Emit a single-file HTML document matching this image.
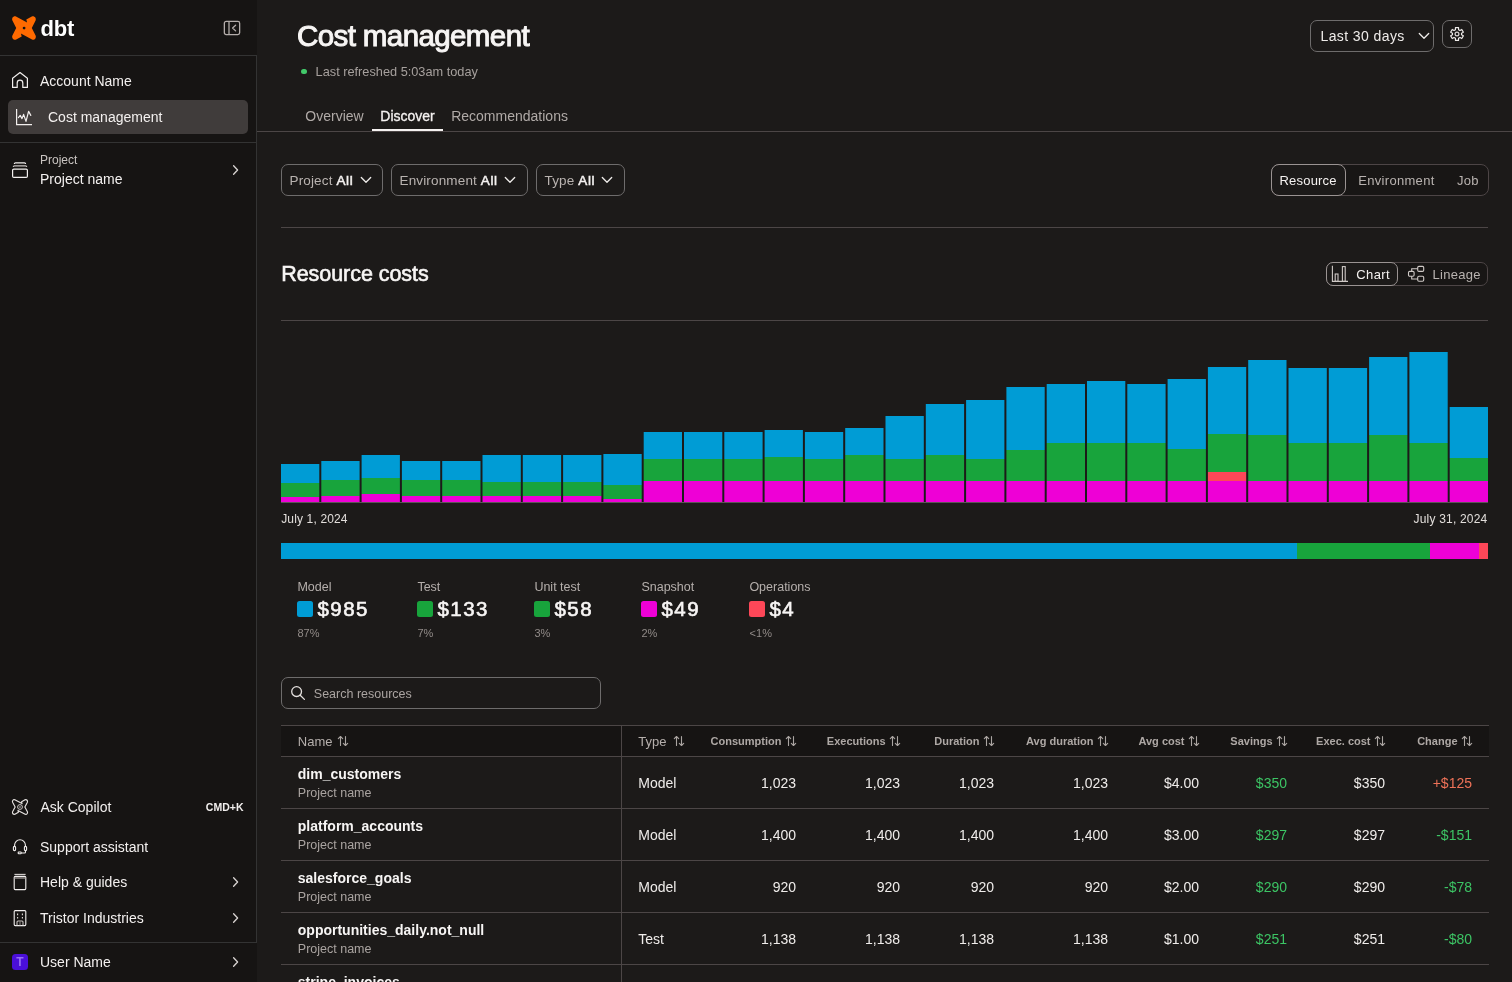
<!DOCTYPE html>
<html><head><meta charset="utf-8"><title>Cost management</title>
<style>
html,body{margin:0;padding:0;}
body{width:1512px;height:982px;overflow:hidden;position:relative;background:#1c1a19;font-family:"Liberation Sans",sans-serif;}
.abs{position:absolute;}
.t{position:absolute;white-space:nowrap;}
#root{position:absolute;left:0;top:0;width:1512px;height:982px;overflow:hidden;will-change:transform;}
svg{overflow:visible}
</style></head><body><div id="root">
<div class="abs" style="left:0px;top:0px;width:257px;height:982px;background:#161413"></div><div class="abs" style="left:0px;top:55px;width:256px;height:888px;border-top:1px solid #333333;border-right:1px solid #333333;border-bottom:1px solid #333333;box-sizing:border-box;width:257px;"></div><svg class="abs" style="left:12px;top:16px" width="24" height="24" viewBox="0 0 24 24">
<path d="M0.4 4.6C-0.6 2.2 1.4-0.4 4 0.5L15.1 6.4 14.3 3.6 19.8 0.5C22.4-0.4 24.6 2.2 23.6 4.6L19.8 12 23.6 19.4C24.6 21.8 22.6 24.4 20 23.5L8.9 17.6 9.7 20.4 4.2 23.5C1.6 24.4-0.6 21.8 0.4 19.4L4.2 12Z" fill="#ff6a00"/>
<circle cx="12.1" cy="12.1" r="1.4" fill="#161413"/></svg><div class="t" style="left:40.50px;top:18.38px;font-size:22px;line-height:22px;color:#ffffff;font-weight:700;letter-spacing:-0.2px;">dbt</div><svg class="abs" style="left:223px;top:20px" width="19" height="16" viewBox="0 0 19 16">
<rect x="1.35" y="1.35" width="15.3" height="13.3" rx="1.8" fill="none" stroke="#b3acaa" stroke-width="1.3"/>
<line x1="6" y1="1.5" x2="6" y2="14.5" stroke="#b3acaa" stroke-width="1.3"/>
<polyline points="12.6,5.3 9.6,8 12.6,10.9" fill="none" stroke="#b3acaa" stroke-width="1.3" stroke-linecap="round" stroke-linejoin="round"/></svg><svg class="abs" style="left:11px;top:71px" width="18" height="18" viewBox="0 0 18 18">
<path d="M1.6 16.4V7.3L9 1.6l7.4 5.7v9.1h-4.6v-4.4a2.8 2.8 0 0 0-5.6 0v4.4z" fill="none" stroke="#f2efee" stroke-width="1.2" stroke-linejoin="round"/></svg><div class="t" style="left:40.00px;top:73.55px;font-size:14px;line-height:14px;color:#f3f0ef;font-weight:400;">Account Name</div><div class="abs" style="left:8px;top:100px;width:240px;height:34px;background:#403c3b;border-radius:5px"></div><svg class="abs" style="left:15px;top:108px" width="18" height="18" viewBox="0 0 18 18">
<polyline points="1.6,1 1.6,16.6 17,16.6" fill="none" stroke="#f2efee" stroke-width="1.2"/>
<polyline points="3.4,9.6 5.2,7.4 7,10.6 8.6,6.4 11,13.4 13.6,3.4 15.8,7.4" fill="none" stroke="#f2efee" stroke-width="1.2" stroke-linejoin="round" stroke-linecap="round"/></svg><div class="t" style="left:48.00px;top:110.15px;font-size:14px;line-height:14px;color:#f3f0ef;font-weight:400;">Cost management</div><div class="abs" style="left:0px;top:142px;width:256px;height:1px;background:#333333"></div><svg class="abs" style="left:11px;top:161px" width="18" height="18" viewBox="0 0 18 18">
<rect x="1.6" y="8.1" width="14.8" height="8.3" rx="1.2" fill="none" stroke="#f2efee" stroke-width="1.2"/>
<path d="M2.3 6.1c0-.8.5-1.2 1.2-1.2h11c.7 0 1.2.4 1.2 1.2" fill="none" stroke="#c9c4c2" stroke-width="1.2"/>
<path d="M3.4 3c0-.7.4-1.1 1.1-1.1h9c.7 0 1.1.4 1.1 1.1" fill="none" stroke="#f2efee" stroke-width="1.2"/></svg><div class="t" style="left:40.00px;top:153.84px;font-size:12px;line-height:12px;color:#c9c4c1;font-weight:400;">Project</div><div class="t" style="left:40.00px;top:172.15px;font-size:14px;line-height:14px;color:#f3f0ef;font-weight:400;">Project name</div><svg class="abs" style="left:231px;top:164px" width="10" height="12" viewBox="0 0 10 12"><polyline points="2.6,1.8 6.6,6 2.6,10.2" fill="none" stroke="#d9d4d2" stroke-width="1.3" stroke-linecap="round" stroke-linejoin="round"/></svg><svg class="abs" style="left:12px;top:799px" width="16" height="16" viewBox="0 0 24 24">
<path d="M0.9 4.9C0 2.7 1.8 0.3 4.2 1.1L15.1 6.9 14.4 4.2 19.6 1.1C22 0.3 24 2.7 23.1 4.9L19.3 12 23.1 19.1C24 21.3 22.2 23.7 19.8 22.9L8.9 17.1 9.6 19.8 4.4 22.9C2 23.7 0 21.3 0.9 19.1L4.7 12Z" fill="none" stroke="#e8e4e2" stroke-width="1.7" stroke-linejoin="round"/>
<circle cx="12" cy="12" r="3.6" fill="none" stroke="#cfcac8" stroke-width="1.5"/><circle cx="12" cy="12" r="1.2" fill="#cfcac8"/></svg><div class="t" style="left:40.50px;top:800.45px;font-size:14px;line-height:14px;color:#f3f0ef;font-weight:400;">Ask Copilot</div><div class="t" style="right:1268.50px;text-align:right;top:802.41px;font-size:10.5px;line-height:10.5px;color:#f2efee;font-weight:700;">CMD+K</div><svg class="abs" style="left:11px;top:838px" width="18" height="17" viewBox="0 0 18 17">
<path d="M3.6 9V7.2a5.4 5.4 0 0 1 10.8 0V9" fill="none" stroke="#f2efee" stroke-width="1.1"/>
<rect x="2.4" y="8.4" width="2.2" height="4.2" rx="1" fill="none" stroke="#f2efee" stroke-width="1.1"/>
<rect x="13.4" y="8.4" width="2.2" height="4.2" rx="1" fill="none" stroke="#f2efee" stroke-width="1.1"/>
<path d="M14.5 12.8v1.2c0 .6-.4 1-1 1h-3.2" fill="none" stroke="#f2efee" stroke-width="1.1"/>
<rect x="7.2" y="14" width="3" height="1.8" rx=".6" fill="none" stroke="#f2efee" stroke-width="1.1"/></svg><div class="t" style="left:40.00px;top:839.55px;font-size:14px;line-height:14px;color:#f3f0ef;font-weight:400;">Support assistant</div><svg class="abs" style="left:12px;top:873px" width="16" height="18" viewBox="0 0 16 18">
<rect x="2.2" y="3.4" width="11.6" height="13.2" rx="1" fill="none" stroke="#f2efee" stroke-width="1.1"/>
<line x1="2.4" y1="1.4" x2="13.6" y2="1.4" stroke="#d9d4d2" stroke-width="1.1"/>
<line x1="2.4" y1="5" x2="13.6" y2="5" stroke="#9c9795" stroke-width="1.4"/></svg><div class="t" style="left:40.00px;top:875.15px;font-size:14px;line-height:14px;color:#f3f0ef;font-weight:400;">Help &amp; guides</div><svg class="abs" style="left:231px;top:876px" width="10" height="12" viewBox="0 0 10 12"><polyline points="2.6,1.8 6.6,6 2.6,10.2" fill="none" stroke="#d9d4d2" stroke-width="1.3" stroke-linecap="round" stroke-linejoin="round"/></svg><svg class="abs" style="left:12px;top:909px" width="16" height="18" viewBox="0 0 16 18">
<rect x="2.2" y="1.6" width="11.6" height="15" rx="1" fill="none" stroke="#f2efee" stroke-width="1.1"/>
<line x1="5.6" y1="4.6" x2="5.6" y2="6.2" stroke="#e0dbd9" stroke-width="1.1"/><line x1="10.4" y1="4.6" x2="10.4" y2="6.2" stroke="#e0dbd9" stroke-width="1.1"/>
<line x1="5.6" y1="8" x2="5.6" y2="9.6" stroke="#e0dbd9" stroke-width="1.1"/><line x1="10.4" y1="8" x2="10.4" y2="9.6" stroke="#e0dbd9" stroke-width="1.1"/>
<path d="M5 16.4v-3.4c0-.6.4-1 1-1h4c.6 0 1 .4 1 1v3.4" fill="none" stroke="#c9c4c2" stroke-width="1.1"/>
<line x1="8" y1="12.4" x2="8" y2="16.4" stroke="#8f8a88" stroke-width="1"/></svg><div class="t" style="left:40.00px;top:911.15px;font-size:14px;line-height:14px;color:#f3f0ef;font-weight:400;">Tristor Industries</div><svg class="abs" style="left:231px;top:912px" width="10" height="12" viewBox="0 0 10 12"><polyline points="2.6,1.8 6.6,6 2.6,10.2" fill="none" stroke="#d9d4d2" stroke-width="1.3" stroke-linecap="round" stroke-linejoin="round"/></svg><div class="abs" style="left:12px;top:954px;width:16px;height:16px;background:#4a0fd9;border-radius:3.5px"></div><div class="t" style="left:12px;top:954px;width:16px;height:16px;line-height:16px;text-align:center;font-size:12px;font-weight:700;color:#946ff0">T</div><div class="t" style="left:40.00px;top:955.35px;font-size:14px;line-height:14px;color:#f3f0ef;font-weight:400;">User Name</div><svg class="abs" style="left:231px;top:956px" width="10" height="12" viewBox="0 0 10 12"><polyline points="2.6,1.8 6.6,6 2.6,10.2" fill="none" stroke="#d9d4d2" stroke-width="1.3" stroke-linecap="round" stroke-linejoin="round"/></svg><div class="t" style="left:297.00px;top:21.33px;font-size:29.5px;line-height:29.5px;color:#f7f5f4;font-weight:400;letter-spacing:-0.6px;-webkit-text-stroke:1px #f7f5f4;">Cost management</div><div class="abs" style="left:301.3px;top:68.8px;width:5.6px;height:5.6px;border-radius:50%;background:#42c96a"></div><div class="t" style="left:315.60px;top:66.21px;font-size:12.75px;line-height:12.75px;color:#a6a09d;font-weight:400;">Last refreshed 5:03am today</div><div class="t" style="left:305.30px;top:108.85px;font-size:14px;line-height:14px;color:#b0aaa7;font-weight:400;">Overview</div><div class="t" style="left:380.30px;top:108.85px;font-size:14px;line-height:14px;color:#f5f2f1;font-weight:400;-webkit-text-stroke:0.3px #f5f2f1;">Discover</div><div class="t" style="left:451.20px;top:108.85px;font-size:14px;line-height:14px;color:#b0aaa7;font-weight:400;">Recommendations</div><div class="abs" style="left:257px;top:131px;width:1255px;height:1px;background:#4c4646"></div><div class="abs" style="left:372px;top:128.7px;width:71px;height:2.3px;background:#f5f2f1"></div><div class="abs" style="left:1310px;top:20px;width:124px;height:32px;border:1px solid #6e6c6c;border-radius:7px;box-sizing:border-box"></div><div class="t" style="left:1320.50px;top:29.35px;font-size:14px;line-height:14px;color:#efecea;font-weight:400;letter-spacing:0.4px;">Last 30 days</div><svg class="abs" style="left:1418px;top:32px" width="12" height="8" viewBox="0 0 12 8"><polyline points="1.3,1.5 6,6.3 10.7,1.5" fill="none" stroke="#efecea" stroke-width="1.3" stroke-linecap="round" stroke-linejoin="round"/></svg><div class="abs" style="left:1442px;top:20px;width:30px;height:28px;border:1px solid #6e6c6c;border-radius:7px;box-sizing:border-box"></div><svg class="abs" style="left:1449px;top:26px" width="16" height="16" viewBox="0 0 16 16"><path d="M6.45 3.67 L6.45 1.58 L9.55 1.58 L9.55 3.67 L10.98 4.49 L12.78 3.45 L14.33 6.13 L12.53 7.18 L12.53 8.82 L14.33 9.87 L12.78 12.55 L10.98 11.51 L9.55 12.33 L9.55 14.42 L6.45 14.42 L6.45 12.33 L5.02 11.51 L3.22 12.55 L1.67 9.87 L3.47 8.82 L3.47 7.18 L1.67 6.13 L3.22 3.45 L5.02 4.49Z" fill="none" stroke="#efecea" stroke-width="1.15" stroke-linejoin="round"/><circle cx="8" cy="8" r="1.9" fill="none" stroke="#d8d4d2" stroke-width="1.2"/></svg><div class="abs" style="left:281px;top:164px;width:102px;height:32px;border:1px solid #6e6c6c;border-radius:7px;box-sizing:border-box"></div><div class="t" style="left:289.5px;top:174.00px;font-size:13.5px;line-height:13px;letter-spacing:0.15px;white-space:pre"><span style="color:#b9b3b0">Project</span> <span style="color:#f5f2f1;-webkit-text-stroke:0.5px #f5f2f1;letter-spacing:0.6px">All</span></div><svg class="abs" style="left:359.5px;top:176px" width="12" height="8" viewBox="0 0 12 8"><polyline points="1.3,1.5 6,6.3 10.7,1.5" fill="none" stroke="#efecea" stroke-width="1.3" stroke-linecap="round" stroke-linejoin="round"/></svg><div class="abs" style="left:391px;top:164px;width:137px;height:32px;border:1px solid #6e6c6c;border-radius:7px;box-sizing:border-box"></div><div class="t" style="left:399.5px;top:174.00px;font-size:13.5px;line-height:13px;letter-spacing:0.15px;white-space:pre"><span style="color:#b9b3b0">Environment</span> <span style="color:#f5f2f1;-webkit-text-stroke:0.5px #f5f2f1;letter-spacing:0.6px">All</span></div><svg class="abs" style="left:504px;top:176px" width="12" height="8" viewBox="0 0 12 8"><polyline points="1.3,1.5 6,6.3 10.7,1.5" fill="none" stroke="#efecea" stroke-width="1.3" stroke-linecap="round" stroke-linejoin="round"/></svg><div class="abs" style="left:536px;top:164px;width:89px;height:32px;border:1px solid #6e6c6c;border-radius:7px;box-sizing:border-box"></div><div class="t" style="left:544.5px;top:174.00px;font-size:13.5px;line-height:13px;letter-spacing:0.15px;white-space:pre"><span style="color:#b9b3b0">Type</span> <span style="color:#f5f2f1;-webkit-text-stroke:0.5px #f5f2f1;letter-spacing:0.6px">All</span></div><svg class="abs" style="left:601px;top:176px" width="12" height="8" viewBox="0 0 12 8"><polyline points="1.3,1.5 6,6.3 10.7,1.5" fill="none" stroke="#efecea" stroke-width="1.3" stroke-linecap="round" stroke-linejoin="round"/></svg><div class="abs" style="left:1271px;top:164px;width:218px;height:32px;border:1px solid #4d4546;border-radius:8px;box-sizing:border-box;background:#181615"></div><div class="abs" style="left:1271px;top:164px;width:75px;height:32px;border:1px solid #9a9392;border-radius:8px;box-sizing:border-box;background:#1c1a19"></div><div class="t" style="left:1279.50px;top:174.30px;font-size:13px;line-height:13px;color:#f5f2f1;font-weight:400;letter-spacing:0.2px;">Resource</div><div class="t" style="left:1358.30px;top:174.30px;font-size:13px;line-height:13px;color:#b9b3b0;font-weight:400;letter-spacing:0.3px;">Environment</div><div class="t" style="left:1457.00px;top:174.30px;font-size:13px;line-height:13px;color:#b9b3b0;font-weight:400;letter-spacing:0.3px;">Job</div><div class="abs" style="left:281px;top:227px;width:1207px;height:1px;background:#4c4646"></div><div class="t" style="left:281.20px;top:264.40px;font-size:21.5px;line-height:21.5px;color:#f7f5f4;font-weight:400;letter-spacing:-0.05px;-webkit-text-stroke:0.6px #f7f5f4;">Resource costs</div><div class="abs" style="left:1326px;top:262px;width:162px;height:24px;border:1px solid #4d4546;border-radius:7px;box-sizing:border-box;background:#181615"></div><div class="abs" style="left:1326px;top:262px;width:72px;height:24px;border:1px solid #9a9392;border-radius:7px;box-sizing:border-box;background:#1c1a19"></div><svg class="abs" style="left:1331px;top:265px" width="18" height="18" viewBox="0 0 18 18">
<polyline points="1.4,0.8 1.4,16.4 17,16.4" fill="none" stroke="#cfc9c6" stroke-width="1.1"/>
<rect x="4.2" y="9" width="2.8" height="7.4" fill="none" stroke="#cfc9c6" stroke-width="1.1"/>
<rect x="11.4" y="1.6" width="2.8" height="14.8" fill="none" stroke="#cfc9c6" stroke-width="1.1"/></svg><div class="t" style="left:1356.30px;top:268.00px;font-size:13px;line-height:13px;color:#f5f2f1;font-weight:400;letter-spacing:0.4px;">Chart</div><svg class="abs" style="left:1407px;top:265px" width="18" height="18" viewBox="0 0 18 18">
<rect x="1.5" y="6.4" width="5.6" height="4.8" rx="1.2" fill="none" stroke="#cfc9c6" stroke-width="1.1"/>
<rect x="10.7" y="1.4" width="6" height="5" rx="1.2" fill="none" stroke="#cfc9c6" stroke-width="1.1"/>
<rect x="10.7" y="11.2" width="6" height="5" rx="1.2" fill="none" stroke="#cfc9c6" stroke-width="1.1"/>
<path d="M4.7 6.4V3.8h6M4.7 11.2v2.8h6" fill="none" stroke="#cfc9c6" stroke-width="1.1"/></svg><div class="t" style="left:1432.50px;top:268.00px;font-size:13px;line-height:13px;color:#b9b3b0;font-weight:400;letter-spacing:0.3px;">Lineage</div><div class="abs" style="left:281px;top:320px;width:1207px;height:1px;background:#4c4646"></div><svg class="abs" style="left:0;top:0" width="1512" height="982" viewBox="0 0 1512 982"><rect x="281.00" y="464" width="38.30" height="19" fill="#009cd5"/><rect x="281.00" y="483" width="38.30" height="14" fill="#18a43c"/><rect x="281.00" y="497" width="38.30" height="5" fill="#ee00d6"/><rect x="321.30" y="461" width="38.30" height="19" fill="#009cd5"/><rect x="321.30" y="480" width="38.30" height="16" fill="#18a43c"/><rect x="321.30" y="496" width="38.30" height="6" fill="#ee00d6"/><rect x="361.60" y="455" width="38.30" height="23" fill="#009cd5"/><rect x="361.60" y="478" width="38.30" height="16" fill="#18a43c"/><rect x="361.60" y="494" width="38.30" height="8" fill="#ee00d6"/><rect x="401.90" y="461" width="38.30" height="19" fill="#009cd5"/><rect x="401.90" y="480" width="38.30" height="16" fill="#18a43c"/><rect x="401.90" y="496" width="38.30" height="6" fill="#ee00d6"/><rect x="442.20" y="461" width="38.30" height="19" fill="#009cd5"/><rect x="442.20" y="480" width="38.30" height="16" fill="#18a43c"/><rect x="442.20" y="496" width="38.30" height="6" fill="#ee00d6"/><rect x="482.50" y="455" width="38.30" height="27" fill="#009cd5"/><rect x="482.50" y="482" width="38.30" height="14" fill="#18a43c"/><rect x="482.50" y="496" width="38.30" height="6" fill="#ee00d6"/><rect x="522.80" y="455" width="38.30" height="27" fill="#009cd5"/><rect x="522.80" y="482" width="38.30" height="14" fill="#18a43c"/><rect x="522.80" y="496" width="38.30" height="6" fill="#ee00d6"/><rect x="563.10" y="455" width="38.30" height="27" fill="#009cd5"/><rect x="563.10" y="482" width="38.30" height="14" fill="#18a43c"/><rect x="563.10" y="496" width="38.30" height="6" fill="#ee00d6"/><rect x="603.40" y="454" width="38.30" height="31" fill="#009cd5"/><rect x="603.40" y="485" width="38.30" height="14" fill="#18a43c"/><rect x="603.40" y="499" width="38.30" height="3" fill="#ee00d6"/><rect x="643.70" y="432" width="38.30" height="27" fill="#009cd5"/><rect x="643.70" y="459" width="38.30" height="22" fill="#18a43c"/><rect x="643.70" y="481" width="38.30" height="21" fill="#ee00d6"/><rect x="684.00" y="432" width="38.30" height="27" fill="#009cd5"/><rect x="684.00" y="459" width="38.30" height="22" fill="#18a43c"/><rect x="684.00" y="481" width="38.30" height="21" fill="#ee00d6"/><rect x="724.30" y="432" width="38.30" height="27" fill="#009cd5"/><rect x="724.30" y="459" width="38.30" height="22" fill="#18a43c"/><rect x="724.30" y="481" width="38.30" height="21" fill="#ee00d6"/><rect x="764.60" y="430" width="38.30" height="27" fill="#009cd5"/><rect x="764.60" y="457" width="38.30" height="24" fill="#18a43c"/><rect x="764.60" y="481" width="38.30" height="21" fill="#ee00d6"/><rect x="804.90" y="432" width="38.30" height="27" fill="#009cd5"/><rect x="804.90" y="459" width="38.30" height="22" fill="#18a43c"/><rect x="804.90" y="481" width="38.30" height="21" fill="#ee00d6"/><rect x="845.20" y="428" width="38.30" height="27" fill="#009cd5"/><rect x="845.20" y="455" width="38.30" height="26" fill="#18a43c"/><rect x="845.20" y="481" width="38.30" height="21" fill="#ee00d6"/><rect x="885.50" y="416" width="38.30" height="43" fill="#009cd5"/><rect x="885.50" y="459" width="38.30" height="22" fill="#18a43c"/><rect x="885.50" y="481" width="38.30" height="21" fill="#ee00d6"/><rect x="925.80" y="404" width="38.30" height="51" fill="#009cd5"/><rect x="925.80" y="455" width="38.30" height="26" fill="#18a43c"/><rect x="925.80" y="481" width="38.30" height="21" fill="#ee00d6"/><rect x="966.10" y="400" width="38.30" height="59" fill="#009cd5"/><rect x="966.10" y="459" width="38.30" height="22" fill="#18a43c"/><rect x="966.10" y="481" width="38.30" height="21" fill="#ee00d6"/><rect x="1006.40" y="387" width="38.30" height="63" fill="#009cd5"/><rect x="1006.40" y="450" width="38.30" height="31" fill="#18a43c"/><rect x="1006.40" y="481" width="38.30" height="21" fill="#ee00d6"/><rect x="1046.70" y="384" width="38.30" height="59" fill="#009cd5"/><rect x="1046.70" y="443" width="38.30" height="38" fill="#18a43c"/><rect x="1046.70" y="481" width="38.30" height="21" fill="#ee00d6"/><rect x="1087.00" y="381" width="38.30" height="62" fill="#009cd5"/><rect x="1087.00" y="443" width="38.30" height="38" fill="#18a43c"/><rect x="1087.00" y="481" width="38.30" height="21" fill="#ee00d6"/><rect x="1127.30" y="384" width="38.30" height="59" fill="#009cd5"/><rect x="1127.30" y="443" width="38.30" height="38" fill="#18a43c"/><rect x="1127.30" y="481" width="38.30" height="21" fill="#ee00d6"/><rect x="1167.60" y="379" width="38.30" height="70" fill="#009cd5"/><rect x="1167.60" y="449" width="38.30" height="32" fill="#18a43c"/><rect x="1167.60" y="481" width="38.30" height="21" fill="#ee00d6"/><rect x="1207.90" y="367" width="38.30" height="67" fill="#009cd5"/><rect x="1207.90" y="434" width="38.30" height="38" fill="#18a43c"/><rect x="1207.90" y="472" width="38.30" height="9" fill="#fd4758"/><rect x="1207.90" y="481" width="38.30" height="21" fill="#ee00d6"/><rect x="1248.20" y="360" width="38.30" height="75" fill="#009cd5"/><rect x="1248.20" y="435" width="38.30" height="46" fill="#18a43c"/><rect x="1248.20" y="481" width="38.30" height="21" fill="#ee00d6"/><rect x="1288.50" y="368" width="38.30" height="75" fill="#009cd5"/><rect x="1288.50" y="443" width="38.30" height="38" fill="#18a43c"/><rect x="1288.50" y="481" width="38.30" height="21" fill="#ee00d6"/><rect x="1328.80" y="368" width="38.30" height="75" fill="#009cd5"/><rect x="1328.80" y="443" width="38.30" height="38" fill="#18a43c"/><rect x="1328.80" y="481" width="38.30" height="21" fill="#ee00d6"/><rect x="1369.10" y="357" width="38.30" height="78" fill="#009cd5"/><rect x="1369.10" y="435" width="38.30" height="46" fill="#18a43c"/><rect x="1369.10" y="481" width="38.30" height="21" fill="#ee00d6"/><rect x="1409.40" y="352" width="38.30" height="91" fill="#009cd5"/><rect x="1409.40" y="443" width="38.30" height="38" fill="#18a43c"/><rect x="1409.40" y="481" width="38.30" height="21" fill="#ee00d6"/><rect x="1449.70" y="407" width="38.30" height="51" fill="#009cd5"/><rect x="1449.70" y="458" width="38.30" height="23" fill="#18a43c"/><rect x="1449.70" y="481" width="38.30" height="21" fill="#ee00d6"/><rect x="281" y="502" width="1207" height="1" fill="#5a5654"/><rect x="281" y="543" width="1016" height="16" fill="#009cd5"/><rect x="1297" y="543" width="133" height="16" fill="#18a43c"/><rect x="1430" y="543" width="49" height="16" fill="#ee00d6"/><rect x="1479" y="543" width="9" height="16" fill="#fd4758"/></svg><div class="t" style="left:281.20px;top:512.84px;font-size:12px;line-height:12px;color:#e2dedb;font-weight:400;letter-spacing:0.15px;">July 1, 2024</div><div class="t" style="right:24.50px;text-align:right;top:512.84px;font-size:12px;line-height:12px;color:#e2dedb;font-weight:400;letter-spacing:0.2px;">July 31, 2024</div><div class="t" style="left:297.40px;top:580.92px;font-size:12.5px;line-height:12.5px;color:#b5afac;font-weight:400;">Model</div><div class="abs" style="left:297px;top:601px;width:16px;height:16px;background:#009cd5;border-radius:2.5px"></div><div class="t" style="left:317.50px;top:599.25px;font-size:20.5px;line-height:20.5px;color:#f7f5f4;font-weight:400;letter-spacing:1.45px;-webkit-text-stroke:0.6px #f7f5f4;">$985</div><div class="t" style="left:297.40px;top:628.19px;font-size:11px;line-height:11px;color:#918b88;font-weight:400;letter-spacing:0.1px;">87%</div><div class="t" style="left:417.40px;top:580.92px;font-size:12.5px;line-height:12.5px;color:#b5afac;font-weight:400;">Test</div><div class="abs" style="left:417px;top:601px;width:16px;height:16px;background:#18a43c;border-radius:2.5px"></div><div class="t" style="left:437.50px;top:599.25px;font-size:20.5px;line-height:20.5px;color:#f7f5f4;font-weight:400;letter-spacing:1.45px;-webkit-text-stroke:0.6px #f7f5f4;">$133</div><div class="t" style="left:417.40px;top:628.19px;font-size:11px;line-height:11px;color:#918b88;font-weight:400;letter-spacing:0.1px;">7%</div><div class="t" style="left:534.40px;top:580.92px;font-size:12.5px;line-height:12.5px;color:#b5afac;font-weight:400;">Unit test</div><div class="abs" style="left:534px;top:601px;width:16px;height:16px;background:#18a43c;border-radius:2.5px"></div><div class="t" style="left:554.50px;top:599.25px;font-size:20.5px;line-height:20.5px;color:#f7f5f4;font-weight:400;letter-spacing:1.45px;-webkit-text-stroke:0.6px #f7f5f4;">$58</div><div class="t" style="left:534.40px;top:628.19px;font-size:11px;line-height:11px;color:#918b88;font-weight:400;letter-spacing:0.1px;">3%</div><div class="t" style="left:641.40px;top:580.92px;font-size:12.5px;line-height:12.5px;color:#b5afac;font-weight:400;">Snapshot</div><div class="abs" style="left:641px;top:601px;width:16px;height:16px;background:#ee00d6;border-radius:2.5px"></div><div class="t" style="left:661.50px;top:599.25px;font-size:20.5px;line-height:20.5px;color:#f7f5f4;font-weight:400;letter-spacing:1.45px;-webkit-text-stroke:0.6px #f7f5f4;">$49</div><div class="t" style="left:641.40px;top:628.19px;font-size:11px;line-height:11px;color:#918b88;font-weight:400;letter-spacing:0.1px;">2%</div><div class="t" style="left:749.40px;top:580.92px;font-size:12.5px;line-height:12.5px;color:#b5afac;font-weight:400;">Operations</div><div class="abs" style="left:749px;top:601px;width:16px;height:16px;background:#fd4758;border-radius:2.5px"></div><div class="t" style="left:769.50px;top:599.25px;font-size:20.5px;line-height:20.5px;color:#f7f5f4;font-weight:400;letter-spacing:1.45px;-webkit-text-stroke:0.6px #f7f5f4;">$4</div><div class="t" style="left:749.40px;top:628.19px;font-size:11px;line-height:11px;color:#918b88;font-weight:400;letter-spacing:0.1px;">&lt;1%</div><div class="abs" style="left:281px;top:677px;width:320px;height:32px;border:1px solid #6e6c6c;border-radius:7px;box-sizing:border-box"></div><svg class="abs" style="left:290px;top:685px" width="16" height="16" viewBox="0 0 16 16">
<circle cx="6.6" cy="6.6" r="4.9" fill="none" stroke="#e6e2e0" stroke-width="1.3"/>
<line x1="10.2" y1="10.2" x2="14.4" y2="14.4" stroke="#e6e2e0" stroke-width="1.3" stroke-linecap="round"/></svg><div class="t" style="left:313.80px;top:687.52px;font-size:12.5px;line-height:12.5px;color:#aaa4a1;font-weight:400;">Search resources</div><div class="abs" style="left:281px;top:725px;width:1208px;height:31px;background:#161413"></div><div class="abs" style="left:281px;top:725px;width:1208px;height:1px;background:#4c4646"></div><div class="abs" style="left:281px;top:756px;width:1208px;height:1px;background:#4c4646"></div><div class="abs" style="left:281px;top:808px;width:1208px;height:1px;background:#4c4646"></div><div class="abs" style="left:281px;top:860px;width:1208px;height:1px;background:#4c4646"></div><div class="abs" style="left:281px;top:912px;width:1208px;height:1px;background:#4c4646"></div><div class="abs" style="left:281px;top:964px;width:1208px;height:1px;background:#4c4646"></div><div class="abs" style="left:621px;top:725px;width:1px;height:257px;background:#4c4646"></div><div class="t" style="left:297.80px;top:735.20px;font-size:13px;line-height:13px;color:#b5afac;font-weight:400;">Name</div><svg class="abs" style="left:337px;top:735px" width="12" height="12" viewBox="0 0 12 12"><path d="M3.5 10.5V1.5M1.3 3.7l2.2-2.2 2.2 2.2M8.5 1.5v9M6.3 8.3l2.2 2.2 2.2-2.2" fill="none" stroke="#aba5a2" stroke-width="1.1" stroke-linecap="round" stroke-linejoin="round"/></svg><div class="t" style="left:638.30px;top:735.20px;font-size:13px;line-height:13px;color:#b5afac;font-weight:400;">Type</div><svg class="abs" style="left:673px;top:735px" width="12" height="12" viewBox="0 0 12 12"><path d="M3.5 10.5V1.5M1.3 3.7l2.2-2.2 2.2 2.2M8.5 1.5v9M6.3 8.3l2.2 2.2 2.2-2.2" fill="none" stroke="#aba5a2" stroke-width="1.1" stroke-linecap="round" stroke-linejoin="round"/></svg><div class="t" style="right:730.50px;text-align:right;top:736.29px;font-size:11px;line-height:11px;color:#aea8a5;font-weight:700;">Consumption</div><svg class="abs" style="left:785px;top:735px" width="12" height="12" viewBox="0 0 12 12"><path d="M3.5 10.5V1.5M1.3 3.7l2.2-2.2 2.2 2.2M8.5 1.5v9M6.3 8.3l2.2 2.2 2.2-2.2" fill="none" stroke="#aba5a2" stroke-width="1.1" stroke-linecap="round" stroke-linejoin="round"/></svg><div class="t" style="right:626.50px;text-align:right;top:736.29px;font-size:11px;line-height:11px;color:#aea8a5;font-weight:700;">Executions</div><svg class="abs" style="left:889px;top:735px" width="12" height="12" viewBox="0 0 12 12"><path d="M3.5 10.5V1.5M1.3 3.7l2.2-2.2 2.2 2.2M8.5 1.5v9M6.3 8.3l2.2 2.2 2.2-2.2" fill="none" stroke="#aba5a2" stroke-width="1.1" stroke-linecap="round" stroke-linejoin="round"/></svg><div class="t" style="right:532.50px;text-align:right;top:736.29px;font-size:11px;line-height:11px;color:#aea8a5;font-weight:700;">Duration</div><svg class="abs" style="left:983px;top:735px" width="12" height="12" viewBox="0 0 12 12"><path d="M3.5 10.5V1.5M1.3 3.7l2.2-2.2 2.2 2.2M8.5 1.5v9M6.3 8.3l2.2 2.2 2.2-2.2" fill="none" stroke="#aba5a2" stroke-width="1.1" stroke-linecap="round" stroke-linejoin="round"/></svg><div class="t" style="right:418.50px;text-align:right;top:736.29px;font-size:11px;line-height:11px;color:#aea8a5;font-weight:700;">Avg duration</div><svg class="abs" style="left:1097px;top:735px" width="12" height="12" viewBox="0 0 12 12"><path d="M3.5 10.5V1.5M1.3 3.7l2.2-2.2 2.2 2.2M8.5 1.5v9M6.3 8.3l2.2 2.2 2.2-2.2" fill="none" stroke="#aba5a2" stroke-width="1.1" stroke-linecap="round" stroke-linejoin="round"/></svg><div class="t" style="right:327.50px;text-align:right;top:736.29px;font-size:11px;line-height:11px;color:#aea8a5;font-weight:700;">Avg cost</div><svg class="abs" style="left:1188px;top:735px" width="12" height="12" viewBox="0 0 12 12"><path d="M3.5 10.5V1.5M1.3 3.7l2.2-2.2 2.2 2.2M8.5 1.5v9M6.3 8.3l2.2 2.2 2.2-2.2" fill="none" stroke="#aba5a2" stroke-width="1.1" stroke-linecap="round" stroke-linejoin="round"/></svg><div class="t" style="right:239.50px;text-align:right;top:736.29px;font-size:11px;line-height:11px;color:#aea8a5;font-weight:700;">Savings</div><svg class="abs" style="left:1276px;top:735px" width="12" height="12" viewBox="0 0 12 12"><path d="M3.5 10.5V1.5M1.3 3.7l2.2-2.2 2.2 2.2M8.5 1.5v9M6.3 8.3l2.2 2.2 2.2-2.2" fill="none" stroke="#aba5a2" stroke-width="1.1" stroke-linecap="round" stroke-linejoin="round"/></svg><div class="t" style="right:141.50px;text-align:right;top:736.29px;font-size:11px;line-height:11px;color:#aea8a5;font-weight:700;">Exec. cost</div><svg class="abs" style="left:1374px;top:735px" width="12" height="12" viewBox="0 0 12 12"><path d="M3.5 10.5V1.5M1.3 3.7l2.2-2.2 2.2 2.2M8.5 1.5v9M6.3 8.3l2.2 2.2 2.2-2.2" fill="none" stroke="#aba5a2" stroke-width="1.1" stroke-linecap="round" stroke-linejoin="round"/></svg><div class="t" style="right:54.50px;text-align:right;top:736.29px;font-size:11px;line-height:11px;color:#aea8a5;font-weight:700;">Change</div><svg class="abs" style="left:1461px;top:735px" width="12" height="12" viewBox="0 0 12 12"><path d="M3.5 10.5V1.5M1.3 3.7l2.2-2.2 2.2 2.2M8.5 1.5v9M6.3 8.3l2.2 2.2 2.2-2.2" fill="none" stroke="#aba5a2" stroke-width="1.1" stroke-linecap="round" stroke-linejoin="round"/></svg><div class="t" style="left:297.80px;top:767.15px;font-size:14px;line-height:14px;color:#f7f5f4;font-weight:700;">dim_customers</div><div class="t" style="left:297.80px;top:787.12px;font-size:12.5px;line-height:12.5px;color:#aaa4a1;font-weight:400;">Project name</div><div class="t" style="left:638.30px;top:775.55px;font-size:14px;line-height:14px;color:#efecea;font-weight:400;">Model</div><div class="t" style="right:716.00px;text-align:right;top:775.55px;font-size:14px;line-height:14px;color:#efecea;font-weight:400;">1,023</div><div class="t" style="right:612.00px;text-align:right;top:775.55px;font-size:14px;line-height:14px;color:#efecea;font-weight:400;">1,023</div><div class="t" style="right:518.00px;text-align:right;top:775.55px;font-size:14px;line-height:14px;color:#efecea;font-weight:400;">1,023</div><div class="t" style="right:404.00px;text-align:right;top:775.55px;font-size:14px;line-height:14px;color:#efecea;font-weight:400;">1,023</div><div class="t" style="right:313.00px;text-align:right;top:775.55px;font-size:14px;line-height:14px;color:#efecea;font-weight:400;">$4.00</div><div class="t" style="right:225.00px;text-align:right;top:775.55px;font-size:14px;line-height:14px;color:#3cc464;font-weight:400;">$350</div><div class="t" style="right:127.00px;text-align:right;top:775.55px;font-size:14px;line-height:14px;color:#efecea;font-weight:400;">$350</div><div class="t" style="right:40.00px;text-align:right;top:775.55px;font-size:14px;line-height:14px;color:#ee7258;font-weight:400;">+$125</div><div class="t" style="left:297.80px;top:819.15px;font-size:14px;line-height:14px;color:#f7f5f4;font-weight:700;">platform_accounts</div><div class="t" style="left:297.80px;top:839.12px;font-size:12.5px;line-height:12.5px;color:#aaa4a1;font-weight:400;">Project name</div><div class="t" style="left:638.30px;top:827.55px;font-size:14px;line-height:14px;color:#efecea;font-weight:400;">Model</div><div class="t" style="right:716.00px;text-align:right;top:827.55px;font-size:14px;line-height:14px;color:#efecea;font-weight:400;">1,400</div><div class="t" style="right:612.00px;text-align:right;top:827.55px;font-size:14px;line-height:14px;color:#efecea;font-weight:400;">1,400</div><div class="t" style="right:518.00px;text-align:right;top:827.55px;font-size:14px;line-height:14px;color:#efecea;font-weight:400;">1,400</div><div class="t" style="right:404.00px;text-align:right;top:827.55px;font-size:14px;line-height:14px;color:#efecea;font-weight:400;">1,400</div><div class="t" style="right:313.00px;text-align:right;top:827.55px;font-size:14px;line-height:14px;color:#efecea;font-weight:400;">$3.00</div><div class="t" style="right:225.00px;text-align:right;top:827.55px;font-size:14px;line-height:14px;color:#3cc464;font-weight:400;">$297</div><div class="t" style="right:127.00px;text-align:right;top:827.55px;font-size:14px;line-height:14px;color:#efecea;font-weight:400;">$297</div><div class="t" style="right:40.00px;text-align:right;top:827.55px;font-size:14px;line-height:14px;color:#3cc464;font-weight:400;">-$151</div><div class="t" style="left:297.80px;top:871.15px;font-size:14px;line-height:14px;color:#f7f5f4;font-weight:700;">salesforce_goals</div><div class="t" style="left:297.80px;top:891.12px;font-size:12.5px;line-height:12.5px;color:#aaa4a1;font-weight:400;">Project name</div><div class="t" style="left:638.30px;top:879.55px;font-size:14px;line-height:14px;color:#efecea;font-weight:400;">Model</div><div class="t" style="right:716.00px;text-align:right;top:879.55px;font-size:14px;line-height:14px;color:#efecea;font-weight:400;">920</div><div class="t" style="right:612.00px;text-align:right;top:879.55px;font-size:14px;line-height:14px;color:#efecea;font-weight:400;">920</div><div class="t" style="right:518.00px;text-align:right;top:879.55px;font-size:14px;line-height:14px;color:#efecea;font-weight:400;">920</div><div class="t" style="right:404.00px;text-align:right;top:879.55px;font-size:14px;line-height:14px;color:#efecea;font-weight:400;">920</div><div class="t" style="right:313.00px;text-align:right;top:879.55px;font-size:14px;line-height:14px;color:#efecea;font-weight:400;">$2.00</div><div class="t" style="right:225.00px;text-align:right;top:879.55px;font-size:14px;line-height:14px;color:#3cc464;font-weight:400;">$290</div><div class="t" style="right:127.00px;text-align:right;top:879.55px;font-size:14px;line-height:14px;color:#efecea;font-weight:400;">$290</div><div class="t" style="right:40.00px;text-align:right;top:879.55px;font-size:14px;line-height:14px;color:#3cc464;font-weight:400;">-$78</div><div class="t" style="left:297.80px;top:923.15px;font-size:14px;line-height:14px;color:#f7f5f4;font-weight:700;">opportunities_daily.not_null</div><div class="t" style="left:297.80px;top:943.12px;font-size:12.5px;line-height:12.5px;color:#aaa4a1;font-weight:400;">Project name</div><div class="t" style="left:638.30px;top:931.55px;font-size:14px;line-height:14px;color:#efecea;font-weight:400;">Test</div><div class="t" style="right:716.00px;text-align:right;top:931.55px;font-size:14px;line-height:14px;color:#efecea;font-weight:400;">1,138</div><div class="t" style="right:612.00px;text-align:right;top:931.55px;font-size:14px;line-height:14px;color:#efecea;font-weight:400;">1,138</div><div class="t" style="right:518.00px;text-align:right;top:931.55px;font-size:14px;line-height:14px;color:#efecea;font-weight:400;">1,138</div><div class="t" style="right:404.00px;text-align:right;top:931.55px;font-size:14px;line-height:14px;color:#efecea;font-weight:400;">1,138</div><div class="t" style="right:313.00px;text-align:right;top:931.55px;font-size:14px;line-height:14px;color:#efecea;font-weight:400;">$1.00</div><div class="t" style="right:225.00px;text-align:right;top:931.55px;font-size:14px;line-height:14px;color:#3cc464;font-weight:400;">$251</div><div class="t" style="right:127.00px;text-align:right;top:931.55px;font-size:14px;line-height:14px;color:#efecea;font-weight:400;">$251</div><div class="t" style="right:40.00px;text-align:right;top:931.55px;font-size:14px;line-height:14px;color:#3cc464;font-weight:400;">-$80</div><div class="t" style="left:297.80px;top:975.15px;font-size:14px;line-height:14px;color:#f7f5f4;font-weight:700;">stripe_invoices</div>
</div></body></html>
